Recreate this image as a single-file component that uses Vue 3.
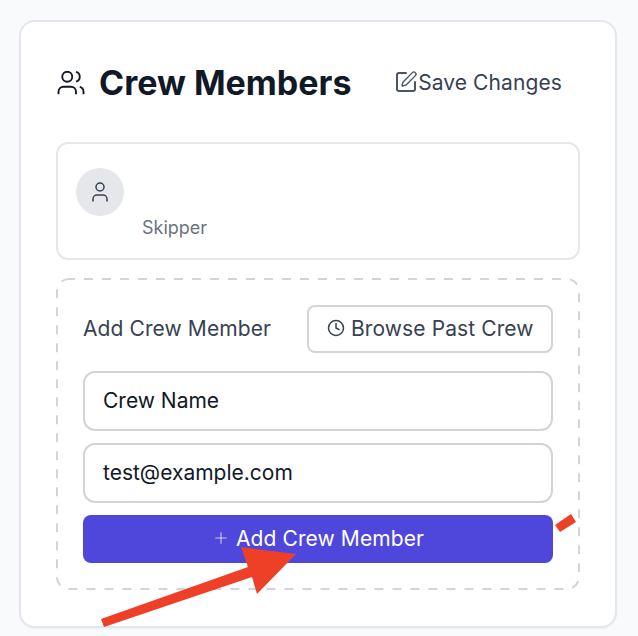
<template>
  <div class="page">
    <section class="card">
      <header class="card-header">
        <h1 class="title">
          <svg class="title-icon" viewBox="0 0 24 24" fill="none" stroke="currentColor" stroke-width="1.5">
            <path d="M16 21v-2a4 4 0 0 0-4-4H6a4 4 0 0 0-4 4v2"/>
            <circle cx="9" cy="7" r="4"/>
            <path d="M22 21v-2a4 4 0 0 0-3-3.87"/>
            <path d="M16 3.13a4 4 0 0 1 0 7.75"/>
          </svg>
          Crew Members
        </h1>
        <button class="save-btn">
          <svg class="save-icon" viewBox="0 0 24 24" fill="none" stroke="currentColor" stroke-linecap="round" stroke-linejoin="round">
            <path stroke-width="2" d="M12 3H5a2 2 0 0 0-2 2v14a2 2 0 0 0 2 2h14a2 2 0 0 0 2-2v-7"/>
            <path stroke-width="1.4" d="M18.375 2.625a1 1 0 0 1 3 3l-9.013 9.014a2 2 0 0 1-.853.505l-2.873.84a.5.5 0 0 1-.62-.62l.84-2.873a2 2 0 0 1 .506-.852z"/>
          </svg>
          Save Changes
        </button>
      </header>

      <div class="member">
        <div class="avatar">
          <svg viewBox="0 0 24 24" fill="none" stroke="currentColor" stroke-width="1.5" stroke-linecap="round" stroke-linejoin="round">
            <path d="M19 21v-2a4 4 0 0 0-4-4H9a4 4 0 0 0-4 4v2"/>
            <circle cx="12" cy="7" r="4"/>
          </svg>
        </div>
        <div class="member-role">Skipper</div>
      </div>

      <div class="add-box">
        <svg class="dash-frame" viewBox="0 0 524 312" fill="none">
          <rect x="1" y="1" width="522" height="310" rx="12" stroke="#d1d5db" stroke-width="2" stroke-dasharray="9 9" stroke-dashoffset="3"/>
        </svg>
        <div class="add-head">
          <span class="add-label">Add Crew Member</span>
          <button class="browse-btn">
            <svg viewBox="0 0 24 24" fill="none" stroke="currentColor" stroke-width="2" stroke-linecap="round" stroke-linejoin="round">
              <circle cx="12" cy="12" r="10"/>
              <polyline points="12 6 12 12 16 14"/>
            </svg>
            Browse Past Crew
          </button>
        </div>
        <input class="field name-field" type="text" value="Crew Name" />
        <input class="field email-field" type="text" value="test@example.com" />
        <button class="add-btn">
          <svg viewBox="0 0 24 24" fill="none" stroke="currentColor" stroke-width="1.5" stroke-linecap="round">
            <path d="M5 12h14"/>
            <path d="M12 5v14"/>
          </svg>
          Add Crew Member
        </button>
      </div>
    </section>

    <!-- annotation drawn over the screenshot -->
    <svg class="annotation" viewBox="0 0 638 636" fill="#ee4027">
      <polygon points="101,619 104,627 252,577 257,594 296,554 241,547 248,567"/>
      <polygon points="555,525 571,514 576,522 560,532"/>
    </svg>
  </div>
</template>

<script setup>
</script>

<style>
body {
  background: #f9fafb;
}
</style>

<style scoped>
.page {
  position: relative;
  width: 638px;
  height: 636px;
  padding: 20px 21px 0 19px;
  box-sizing: border-box;
  font-family: Inter, "Liberation Sans", sans-serif;
  overflow: hidden;
}

.card {
  box-sizing: border-box;
  width: 598px;
  height: 608px;
  padding: 36px 35px;
  background: #fff;
  border: 2px solid #e5e7eb;
  border-radius: 16px;
  box-shadow: 0 1px 2px rgba(0, 0, 0, 0.05);
}

.card-header {
  display: flex;
  align-items: center;
  justify-content: space-between;
  height: 48px;
  margin-bottom: 36px;
}

.title {
  display: flex;
  align-items: center;
  gap: 13px;
  margin: 0;
  font-size: 34px;
  font-weight: 700;
  color: #111827;
}

.title-icon {
  width: 30px;
  height: 30px;
  margin-top: 2px;
  flex: none;
}

.save-btn {
  display: flex;
  align-items: center;
  gap: 0;
  margin-right: 18px;
  padding: 0;
  border: none;
  background: none;
  font: 400 21px Inter, "Liberation Sans", sans-serif;
  letter-spacing: 0.1px;
  color: #374151;
}

.save-icon {
  width: 24px;
  height: 24px;
  color: #4b5563;
}

.member {
  box-sizing: border-box;
  height: 118px;
  padding: 24px 18px 0;
  border: 2px solid #e5e7eb;
  border-radius: 12px;
}

.avatar {
  display: flex;
  align-items: center;
  justify-content: center;
  width: 48px;
  height: 48px;
  border-radius: 50%;
  background: #e5e7eb;
  color: #374151;
}

.avatar svg {
  width: 24px;
  height: 24px;
}

.member-role {
  margin: 0 0 0 48px;
  padding-left: 18px;
  font-size: 18px;
  line-height: 24px;
  color: #6b7280;
}

.add-box {
  position: relative;
  box-sizing: border-box;
  height: 312px;
  margin-top: 18px;
  padding: 27px;
}

.dash-frame {
  position: absolute;
  top: 0;
  left: 0;
  width: 524px;
  height: 312px;
}

.add-head {
  position: relative;
  display: flex;
  align-items: center;
  justify-content: space-between;
  margin-bottom: 18px;
}

.add-label {
  padding-bottom: 2px;
  font-size: 21px;
  font-weight: 400;
  letter-spacing: 0.1px;
  color: #374151;
}

.browse-btn {
  display: flex;
  align-items: center;
  gap: 6px;
  box-sizing: border-box;
  width: 246px;
  height: 48px;
  padding: 0 0 2px 18px;
  background: #fff;
  border: 2px solid #d1d5db;
  border-radius: 8px;
  font: 400 21px Inter, "Liberation Sans", sans-serif;
  letter-spacing: 0.1px;
  color: #374151;
  white-space: nowrap;
}

.browse-btn svg {
  width: 18px;
  height: 18px;
}

.field {
  position: relative;
  display: block;
  box-sizing: border-box;
  width: 100%;
  height: 60px;
  padding: 0 18px 2px;
  margin-bottom: 12px;
  background: #fff;
  border: 2px solid #d1d5db;
  border-radius: 12px;
  font: 400 21px Inter, "Liberation Sans", sans-serif;
  color: #111827;
  outline: none;
}

.add-btn {
  position: relative;
  display: flex;
  align-items: center;
  justify-content: center;
  gap: 6px;
  width: 100%;
  height: 48px;
  padding: 0 0 2px;
  border: none;
  border-radius: 8px;
  background: #4f46dc;
  font: 400 21px Inter, "Liberation Sans", sans-serif;
  letter-spacing: 0.1px;
  color: #fff;
}

.add-btn svg {
  width: 18px;
  height: 18px;
  color: rgba(255, 255, 255, 0.7);
}

.annotation {
  position: absolute;
  top: 0;
  left: 0;
  width: 638px;
  height: 636px;
  pointer-events: none;
}
</style>
